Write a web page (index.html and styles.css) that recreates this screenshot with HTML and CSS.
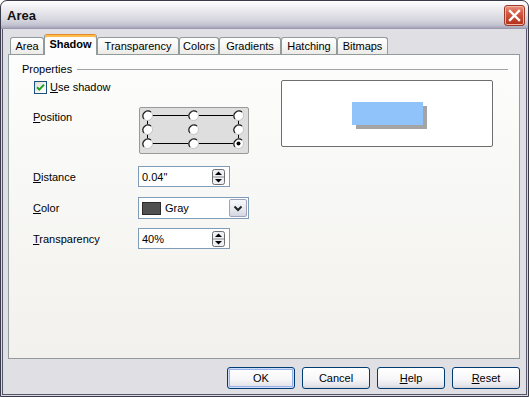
FILE: index.html
```html
<!DOCTYPE html>
<html>
<head>
<meta charset="utf-8">
<title>Area</title>
<link rel="stylesheet" href="styles.css">
</head>
<body>
<div class="window">
  <div class="titlebar">
    <span class="title">Area</span>
    <span class="close">
      <svg width="19" height="19" viewBox="0 0 19 19"><path d="M5 5 L14 14 M14 5 L5 14" stroke="#fff" stroke-width="2.4" stroke-linecap="square"/></svg>
    </span>
  </div>
  <div class="client">
    <div class="tabs">
      <div class="tab w-area">Area</div>
      <div class="tab sel w-shadow">Shadow</div>
      <div class="tab w-transp">Transparency</div>
      <div class="tab w-colors">Colors</div>
      <div class="tab w-grad">Gradients</div>
      <div class="tab w-hatch">Hatching</div>
      <div class="tab w-bitmaps">Bitmaps</div>
    </div>
    <div class="panel">
      <div class="group-head"><span>Properties</span><span class="rule"></span></div>
      <div class="group-body">
        <div class="controls">
          <div class="check-row">
            <span class="checkbox">
              <svg width="11" height="11" viewBox="0 0 11 11"><path d="M2 5.2 L4.3 7.6 L9 2.6" fill="none" stroke="#21a121" stroke-width="2"/></svg>
            </span>
            <span class="check-label"><u>U</u>se shadow</span>
          </div>
          <div class="row row-pos">
            <span class="lbl"><u>P</u>osition</span>
            <div class="posbox">
              <svg width="108" height="45" viewBox="0 0 108 45">
                <defs>
                  <g id="rb">
                    <circle cx="0" cy="0" r="5" fill="#fff" stroke="#c4c4c4" stroke-width="1"/>
                    <path d="M-3.5 3.5 A5 5 0 0 1 3.5 -3.5" fill="none" stroke="#1e1e1e" stroke-width="1.2"/>
                  </g>
                </defs>
                <rect x="7.5" y="7.5" width="91" height="28" fill="none" stroke="#000" stroke-width="1"/>
                <use href="#rb" x="7.5" y="7.5"/>
                <use href="#rb" x="53.5" y="7.5"/>
                <use href="#rb" x="98.5" y="7.5"/>
                <use href="#rb" x="7.5" y="21.5"/>
                <use href="#rb" x="53.5" y="21.5"/>
                <use href="#rb" x="98.5" y="21.5"/>
                <use href="#rb" x="7.5" y="35.5"/>
                <use href="#rb" x="53.5" y="35.5"/>
                <use href="#rb" x="98.5" y="35.5"/>
                <circle cx="98.5" cy="35.5" r="2" fill="#000"/>
              </svg>
            </div>
          </div>
          <div class="row row-dist">
            <span class="lbl"><u>D</u>istance</span>
            <div class="spin"><span class="val">0.04"</span>
              <svg class="spinbtn" width="13" height="16" viewBox="0 0 13 16">
                <rect x="0.5" y="0.5" width="12" height="15" rx="2" fill="#eef0f5" stroke="#6e6e6e"/>
                <line x1="1" y1="8" x2="12" y2="8" stroke="#8a8a8a"/>
                <path d="M3 6 L6.5 2.5 L10 6 Z" fill="#000"/>
                <path d="M3 10 L6.5 13.5 L10 10 Z" fill="#000"/>
              </svg>
            </div>
          </div>
          <div class="row row-color">
            <span class="lbl"><u>C</u>olor</span>
            <div class="combo">
              <span class="swatch"></span><span class="val">Gray</span>
              <span class="dropbtn">
                <svg width="16" height="17" viewBox="0 0 16 17"><path d="M4.5 6.5 L8 10 L11.5 6.5" fill="none" stroke="#222" stroke-width="2"/></svg>
              </span>
            </div>
          </div>
          <div class="row row-transp">
            <span class="lbl"><u>T</u>ransparency</span>
            <div class="spin"><span class="val">40%</span>
              <svg class="spinbtn" width="13" height="16" viewBox="0 0 13 16">
                <rect x="0.5" y="0.5" width="12" height="15" rx="2" fill="#eef0f5" stroke="#6e6e6e"/>
                <line x1="1" y1="8" x2="12" y2="8" stroke="#8a8a8a"/>
                <path d="M3 6 L6.5 2.5 L10 6 Z" fill="#000"/>
                <path d="M3 10 L6.5 13.5 L10 10 Z" fill="#000"/>
              </svg>
            </div>
          </div>
        </div>
        <div class="preview"><div class="sample"></div></div>
      </div>
    </div>
    <div class="buttons">
      <button class="btn default">OK</button>
      <button class="btn">Cancel</button>
      <button class="btn"><u>H</u>elp</button>
      <button class="btn"><u>R</u>eset</button>
    </div>
  </div>
</div>
</body>
</html>
```
FILE: styles.css
```css
html, body {
  margin: 0;
  padding: 0;
  background: #ffffff;
}
body {
  font-family: "Liberation Sans", Arial, sans-serif;
  font-size: 11px;
  color: #000;
}
u { text-decoration: underline; text-underline-offset: 1px; }

.window {
  width: 529px;
  height: 397px;
  box-sizing: border-box;
  border: 1px solid #3a3a4a;
  border-radius: 7px 7px 0 0;
  background: #e0dfe3;
  box-shadow: inset 0 0 0 1px #d8d8e0, inset 0 0 0 2px #55556a;
  display: flex;
  flex-direction: column;
  overflow: hidden;
}

.titlebar {
  height: 27px;
  flex: none;
  display: flex;
  align-items: center;
  justify-content: space-between;
  padding: 0 3px 0 6px;
  border-bottom: 1px solid #9a9aae;
  border-radius: 6px 6px 0 0;
  background: linear-gradient(to bottom, #ffffff 0%, #f4f4f7 18%, #e4e4ea 45%, #d6d6df 70%, #c4c4d2 88%, #a6a6ba 100%);
}
.title {
  font-weight: bold;
  font-size: 13px;
  color: #111;
  margin-top: 1px;
}
.close {
  width: 21px;
  height: 21px;
  box-sizing: border-box;
  margin-top: 2px;
  border: 1px solid #a03a28;
  border-radius: 3px;
  background: linear-gradient(to bottom, #e89a84 0%, #d8604a 30%, #c2412a 70%, #b0301c 100%);
  box-shadow: inset 0 0 0 1px #f2b4a4;
  display: flex;
  align-items: center;
  justify-content: center;
}

.client {
  flex: 1;
  display: flex;
  flex-direction: column;
  padding: 5px 8px 0 7px;
}

.tabs {
  height: 20px;
  display: flex;
  align-items: flex-end;
  padding-left: 2px;
}
.tab {
  height: 17px;
  box-sizing: border-box;
  border: 1px solid #919b9c;
  border-bottom: none;
  border-radius: 3px 3px 0 0;
  background: linear-gradient(to bottom, #ffffff 0%, #f7f7f6 50%, #ebeae5 100%);
  text-align: center;
  line-height: 16px;
  white-space: nowrap;
}
.tab.sel {
  height: 21px;
  margin-bottom: -1px;
  position: relative;
  z-index: 1;
  font-weight: bold;
  border-top: 1px solid #e68b2c;
  box-shadow: inset 0 2px 0 #fbbd4a;
  background: #fdfdfd;
  line-height: 19px;
}
.w-area { width: 34px; }
.w-shadow { width: 53px; }
.w-transp { width: 82px; }
.w-colors { width: 40px; }
.w-grad { width: 62px; }
.w-hatch { width: 56px; }
.w-bitmaps { width: 51px; }

.panel {
  height: 305px;
  box-sizing: border-box;
  flex: none;
  border: 1px solid #919b9c;
  background: linear-gradient(to bottom, #fdfdfd 0%, #f8f8f6 40%, #f2f1ed 100%);
}

.group-head {
  display: flex;
  align-items: center;
  height: 14px;
  margin: 7px 11px 0 13px;
  line-height: 14px;
}
.rule {
  flex: 1;
  height: 1px;
  margin-left: 5px;
  background: #a4a4a4;
}

.group-body {
  display: flex;
  align-items: flex-start;
  margin-top: 4px;
  padding-left: 24px;
}
.controls {
  width: 216px;
  display: flex;
  flex-direction: column;
}
.check-row {
  height: 14px;
  display: flex;
  align-items: center;
}
.checkbox {
  width: 13px;
  height: 13px;
  box-sizing: border-box;
  margin: 1px 0 0 1px;
  border: 1px solid #1c5180;
  background: linear-gradient(135deg, #dcdcd7 0%, #f4f4f2 60%, #ffffff 100%);
  display: flex;
  align-items: center;
  justify-content: center;
}
.check-label { margin-left: 3px; }

.row {
  display: flex;
  align-items: center;
}
.lbl { width: 105px; flex: none; }
.row-pos { align-items: flex-start; margin-top: 13px; }
.row-pos .lbl { margin-top: 4px; }
.row-dist { margin-top: 12px; }
.row-color { margin-top: 10px; }
.row-transp { margin-top: 9px; }

.posbox {
  width: 110px;
  height: 47px;
  box-sizing: border-box;
  margin-left: 1px;
  border: 1px solid #9a9a9a;
  border-radius: 2px;
  background: #dedede;
  display: flex;
}

.spin {
  width: 92px;
  height: 21px;
  box-sizing: border-box;
  border: 1px solid #7f9db9;
  background: #fff;
  display: flex;
  align-items: center;
  justify-content: space-between;
  padding: 0 3px 0 3px;
}
.spinbtn { margin-right: 1px; }

.combo {
  width: 111px;
  height: 22px;
  box-sizing: border-box;
  border: 1px solid #7f9db9;
  background: #fff;
  display: flex;
  align-items: center;
  padding: 0 0 0 3px;
}
.swatch {
  width: 19px;
  height: 13px;
  box-sizing: border-box;
  border: 1px solid #2a2a2a;
  background: #505050;
  flex: none;
}
.combo .val { margin-left: 4px; flex: 1; }
.dropbtn {
  width: 18px;
  height: 18px;
  box-sizing: border-box;
  margin-right: 1px;
  border: 1px solid #9ea3b6;
  border-radius: 2px;
  background: linear-gradient(to bottom, #f6f7fb 0%, #e6e8ef 60%, #d3d6e1 100%);
  display: flex;
  align-items: center;
  justify-content: center;
}

.preview {
  width: 212px;
  height: 67px;
  box-sizing: border-box;
  margin-left: 32px;
  border: 1px solid #6e6e6e;
  border-radius: 2px;
  background: #ffffff;
  display: flex;
  align-items: center;
  justify-content: center;
}
.sample {
  width: 71px;
  height: 23px;
  background: #91c3fb;
  box-shadow: 4px 4px 0 #a4a4a4;
}

.buttons {
  display: flex;
  justify-content: flex-end;
  gap: 7px;
  margin-top: 8px;
}
.btn {
  width: 68px;
  height: 22px;
  box-sizing: border-box;
  border: 1px solid #003c74;
  border-radius: 3px;
  background: linear-gradient(to bottom, #ffffff 0%, #f7f7f9 55%, #e7e7ec 85%, #d4d4dc 100%);
  font-family: "Liberation Sans", Arial, sans-serif;
  font-size: 11px;
  color: #000;
  padding: 0;
  text-align: center;
}
.btn.default {
  box-shadow: inset 0 0 0 1px #cfdcf7, inset 0 0 0 2px #97b2ea;
}
```
